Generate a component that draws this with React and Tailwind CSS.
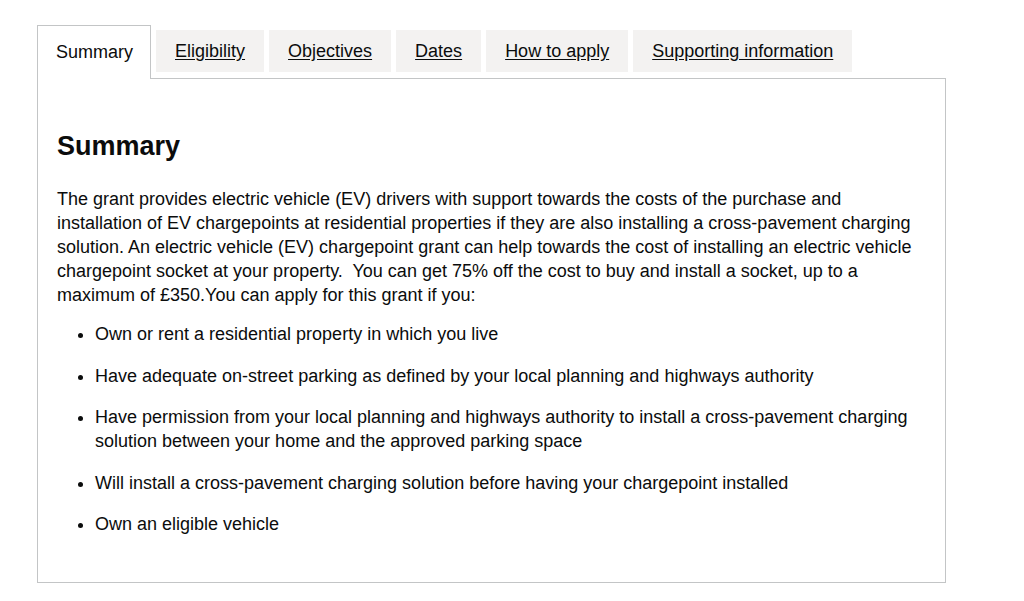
import { useState } from 'react';

const tabs = ['Summary', 'Eligibility', 'Objectives', 'Dates', 'How to apply', 'Supporting information'];

const items = [
    'Own or rent a residential property in which you live',
    'Have adequate on-street parking as defined by your local planning and highways authority',
    'Have permission from your local planning and highways authority to install a cross-pavement charging solution between your home and the approved parking space',
    'Will install a cross-pavement charging solution before having your chargepoint installed',
    'Own an eligible vehicle',
];

export default function App() {
    const [active, setActive] = useState('Summary');

    return (
        <div
            className="min-h-[601px] bg-white pt-[25px] pl-[37px] text-[#0b0c0c]"
            style={{ fontFamily: '"Liberation Sans", Arial, sans-serif' }}
        >
            <div className="w-[909px]">
                <ul className="flex items-start">
                    {tabs.map((tab) =>
                        tab === active ? (
                            <li
                                key={tab}
                                className="relative z-10 -mb-px mr-[5px] border border-b-0 border-[#c3c5c6] bg-white pl-[18px] pr-[17px] pt-[15px] pb-[16px] text-[18px] leading-[22px]"
                            >
                                {tab}
                            </li>
                        ) : (
                            <li key={tab} className="mt-[5px] mr-[5px] bg-[#f3f2f1] px-[19px] py-[10px] text-[18px] leading-[22px]">
                                <a
                                    href="#"
                                    onClick={(e) => {
                                        e.preventDefault();
                                        setActive(tab);
                                    }}
                                    className="text-[#0b0c0c] underline underline-offset-[2px]"
                                >
                                    {tab}
                                </a>
                            </li>
                        )
                    )}
                </ul>
                <div className="border border-[#c3c5c6] px-[19px] pt-[51px] pb-[46px]">
                    <h2 className="mb-[25px] text-[27px] font-bold leading-[32px]">Summary</h2>
                    <p className="text-[18px] leading-[24px]">
                        The grant provides electric vehicle (EV) drivers with support towards the costs of the purchase and
                        installation of EV chargepoints at residential properties if they are also installing a cross-pavement
                        charging solution. An electric vehicle (EV) chargepoint grant can help towards the cost of installing an
                        electric vehicle chargepoint socket at your property.&nbsp; You can get 75% off the cost to buy and install
                        a socket, up to a maximum of £350.You can apply for this grant if you:
                    </p>
                    <ul className="mt-[15px] list-disc pl-[38px] text-[18px] leading-[24px]">
                        {items.map((item) => (
                            <li key={item} className="mb-[17.5px] last:mb-0">
                                {item}
                            </li>
                        ))}
                    </ul>
                </div>
            </div>
        </div>
    );
}
